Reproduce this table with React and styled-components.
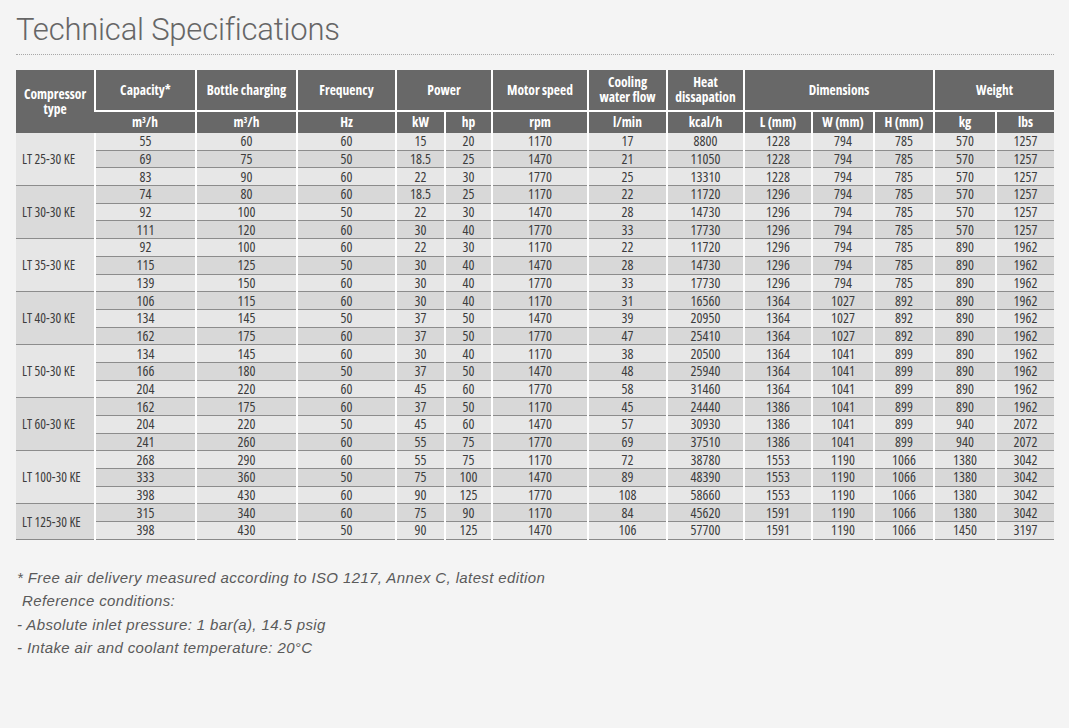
import React from "react";
import styled, { createGlobalStyle } from "styled-components";

const Global = createGlobalStyle`
  html, body { margin: 0; padding: 0; background: #f4f4f4; }
  body { font-family: "Roboto", "Liberation Sans", sans-serif; }
`;

const Page = styled.div`
  width: 1069px;
  height: 728px;
  box-sizing: border-box;
  padding: 12px 15px 0 16px;
  background: #f4f4f4;
`;

const Title = styled.h1`
  margin: 0;
  font-family: "Roboto", "Liberation Sans", sans-serif;
  font-weight: 300;
  font-size: 31px;
  line-height: 36px;
  color: #666;
  letter-spacing: -0.2px;
`;

const Dotted = styled.div`
  margin-top: 6px;
  border-top: 1px dotted #a8a8a8;
  width: 1038px;
`;

const Table = styled.table`
  margin-top: 15px;
  width: 1038px;
  table-layout: fixed;
  border-collapse: collapse;
  font-family: "Open Sans", "Liberation Sans", sans-serif;
  font-stretch: 75%;
  border-bottom: 1px solid #8a8a8a;
`;

const Th = styled.th`
  background: #686868;
  color: #fff;
  font-weight: 700;
  font-size: 13.5px;
  line-height: 15px;
  text-align: center;
  vertical-align: middle;
  padding: 0 2px;
  border-left: 2px solid #fff;
  border-top: ${(p) => (p.$sub ? "2px solid #fff" : "0")};
  height: ${(p) => (p.$sub ? "21px" : "40px")};
  &:first-child { border-left: 0; }
`;

const Sup = styled.sup`
  font-size: 0.6em;
  line-height: 0;
  vertical-align: 0.45em;
`;

const Td = styled.td`
  background: ${(p) => (p.$dark ? "#d8d8d8" : "#e7e7e7")};
  color: #3c3c3c;
  font-size: 14px;
  line-height: 14px;
  height: 16.7px;
  padding: 0;
  text-align: center;
  vertical-align: middle;
  border-left: 2px solid #fff;
  border-top: 1px solid #8c8c8c;
`;

const TypeCell = styled.td`
  background: ${(p) => (p.$dark ? "#dadada" : "#e6e6e6")};
  color: #3c3c3c;
  font-size: 13.5px;
  text-align: left;
  vertical-align: middle;
  padding: 0 0 0 6px;
  border-top: ${(p) => (p.$first ? "0" : "1px solid #8c8c8c")};
  white-space: nowrap;
`;

const FirstRowTd = styled(Td)`
  border-top: 0;
`;

const Notes = styled.div`
  margin-top: 26px;
  padding-left: 1px;
  font-family: "Liberation Sans", Arial, sans-serif;
  font-style: italic;
  font-size: 15px;
  line-height: 23.4px;
  letter-spacing: 0.38px;
  color: #5a5a5a;
`;

const Note = styled.div`
  padding-left: ${(p) => (p.$indent ? "5px" : "0")};
`;

const widths = [79, 101, 101, 99, 49, 47, 96, 79, 77, 68, 62, 60, 62, 58];

const groups = [
  ["LT 25-30 KE", [
    [55, 60, 60, 15, 20, 1170, 17, 8800, 1228, 794, 785, 570, 1257],
    [69, 75, 50, 18.5, 25, 1470, 21, 11050, 1228, 794, 785, 570, 1257],
    [83, 90, 60, 22, 30, 1770, 25, 13310, 1228, 794, 785, 570, 1257],
  ]],
  ["LT 30-30 KE", [
    [74, 80, 60, 18.5, 25, 1170, 22, 11720, 1296, 794, 785, 570, 1257],
    [92, 100, 50, 22, 30, 1470, 28, 14730, 1296, 794, 785, 570, 1257],
    [111, 120, 60, 30, 40, 1770, 33, 17730, 1296, 794, 785, 570, 1257],
  ]],
  ["LT 35-30 KE", [
    [92, 100, 60, 22, 30, 1170, 22, 11720, 1296, 794, 785, 890, 1962],
    [115, 125, 50, 30, 40, 1470, 28, 14730, 1296, 794, 785, 890, 1962],
    [139, 150, 60, 30, 40, 1770, 33, 17730, 1296, 794, 785, 890, 1962],
  ]],
  ["LT 40-30 KE", [
    [106, 115, 60, 30, 40, 1170, 31, 16560, 1364, 1027, 892, 890, 1962],
    [134, 145, 50, 37, 50, 1470, 39, 20950, 1364, 1027, 892, 890, 1962],
    [162, 175, 60, 37, 50, 1770, 47, 25410, 1364, 1027, 892, 890, 1962],
  ]],
  ["LT 50-30 KE", [
    [134, 145, 60, 30, 40, 1170, 38, 20500, 1364, 1041, 899, 890, 1962],
    [166, 180, 50, 37, 50, 1470, 48, 25940, 1364, 1041, 899, 890, 1962],
    [204, 220, 60, 45, 60, 1770, 58, 31460, 1364, 1041, 899, 890, 1962],
  ]],
  ["LT 60-30 KE", [
    [162, 175, 60, 37, 50, 1170, 45, 24440, 1386, 1041, 899, 890, 1962],
    [204, 220, 50, 45, 60, 1470, 57, 30930, 1386, 1041, 899, 940, 2072],
    [241, 260, 60, 55, 75, 1770, 69, 37510, 1386, 1041, 899, 940, 2072],
  ]],
  ["LT 100-30 KE", [
    [268, 290, 60, 55, 75, 1170, 72, 38780, 1553, 1190, 1066, 1380, 3042],
    [333, 360, 50, 75, 100, 1470, 89, 48390, 1553, 1190, 1066, 1380, 3042],
    [398, 430, 60, 90, 125, 1770, 108, 58660, 1553, 1190, 1066, 1380, 3042],
  ]],
  ["LT 125-30 KE", [
    [315, 340, 60, 75, 90, 1170, 84, 45620, 1591, 1190, 1066, 1380, 3042],
    [398, 430, 50, 90, 125, 1470, 106, 57700, 1591, 1190, 1066, 1450, 3197],
  ]],
];

const cube = (
  <>
    m<Sup>3</Sup>/h
  </>
);
const units = [cube, cube, "Hz", "kW", "hp", "rpm", "l/min", "kcal/h", "L (mm)", "W (mm)", "H (mm)", "kg", "lbs"];

export default function App() {
  let rowIndex = 0;
  return (
    <>
      <Global />
      <Page>
        <Title>Technical Specifications</Title>
        <Dotted />
        <Table>
          <colgroup>
            {widths.map((w, i) => (
              <col key={i} style={{ width: w }} />
            ))}
          </colgroup>
          <thead>
            <tr>
              <Th rowSpan={2}>Compressor<br />type</Th>
              <Th>Capacity*</Th>
              <Th>Bottle charging</Th>
              <Th>Frequency</Th>
              <Th colSpan={2}>Power</Th>
              <Th>Motor speed</Th>
              <Th>Cooling<br />water flow</Th>
              <Th>Heat<br />dissapation</Th>
              <Th colSpan={3}>Dimensions</Th>
              <Th colSpan={2}>Weight</Th>
            </tr>
            <tr>
              {units.map((u, i) => (
                <Th key={i} $sub>{u}</Th>
              ))}
            </tr>
          </thead>
          <tbody>
            {groups.map(([name, rows], g) =>
              rows.map((r, j) => {
                rowIndex += 1;
                const dark = rowIndex % 2 === 0;
                const Cell = rowIndex === 1 ? FirstRowTd : Td;
                return (
                  <tr key={`${g}-${j}`}>
                    {j === 0 && (
                      <TypeCell rowSpan={rows.length} $dark={g % 2 === 1} $first={g === 0}>
                        {name}
                      </TypeCell>
                    )}
                    {r.map((v, k) => (
                      <Cell key={k} $dark={dark}>{v}</Cell>
                    ))}
                  </tr>
                );
              })
            )}
          </tbody>
        </Table>
        <Notes>
          <Note>* Free air delivery measured according to ISO 1217, Annex C, latest edition</Note>
          <Note $indent>Reference conditions:</Note>
          <Note>- Absolute inlet pressure: 1 bar(a), 14.5 psig</Note>
          <Note>- Intake air and coolant temperature: 20°C</Note>
        </Notes>
      </Page>
    </>
  );
}
